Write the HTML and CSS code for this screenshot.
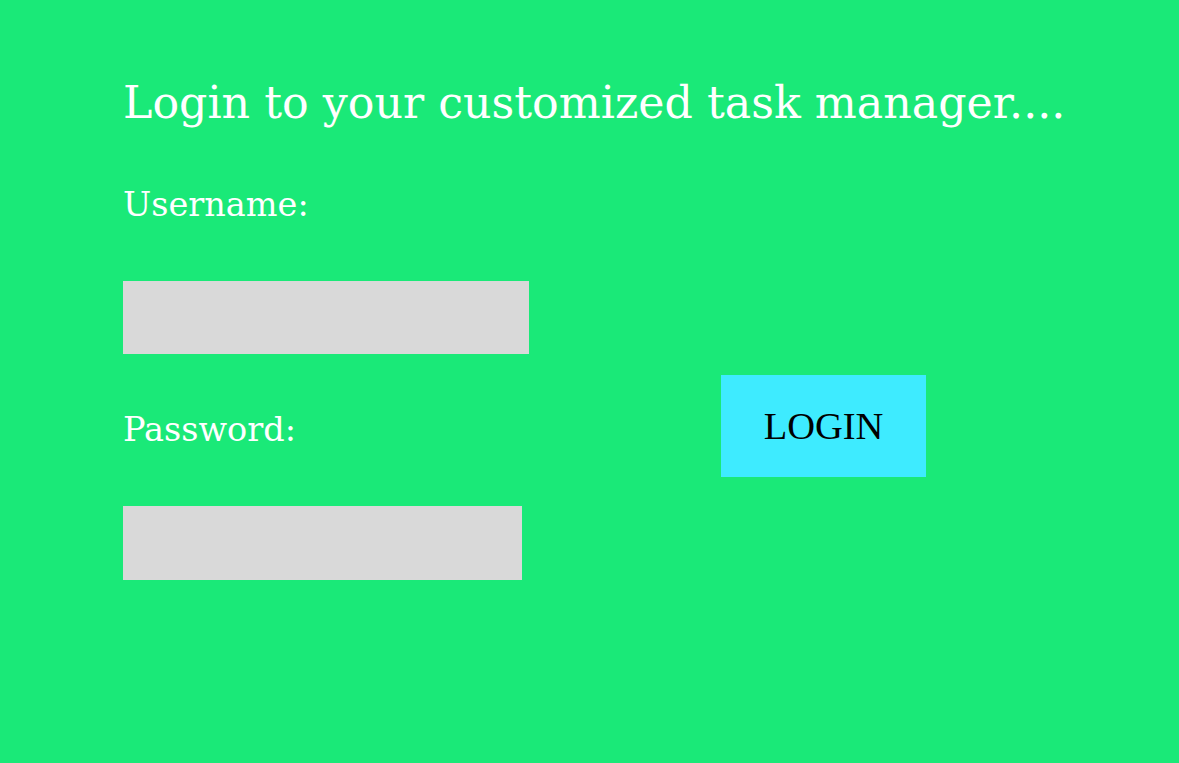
FILE: index.html
```html
<!DOCTYPE html>
<html lang="en">
<head>
<meta charset="utf-8">
<title>Login</title>
<link rel="stylesheet" href="styles.css">
</head>
<body>
<main class="page">
  <h1 class="title">Login to your customized task manager....</h1>
  <form class="login-form">
    <label class="field-label" for="username">Username:</label>
    <input class="field-input field-user" id="username" type="text">
    <label class="field-label" for="password">Password:</label>
    <input class="field-input field-pass" id="password" type="password">
    <button class="login-btn" type="button">LOGIN</button>
  </form>
</main>
</body>
</html>
```

FILE: styles.css
```css
html, body {
  margin: 0;
  padding: 0;
  background: #1ae978;
  height: 100%;
}

.page {
  padding: 73px 0 0 123px;
  font-family: "DejaVu Serif", "Liberation Serif", serif;
  color: #ffffff;
}

.title {
  margin: 0 0 48px 0;
  font-size: 44.3px;
  line-height: 60px;
  font-weight: normal;
  white-space: nowrap;
}

.login-form {
  display: grid;
  grid-template-columns: 406px 205px;
  column-gap: 192px;
  row-gap: 52px;
  align-items: start;
}

.field-label {
  grid-column: 1;
  font-size: 33.5px;
  line-height: 48px;
}

.field-input {
  grid-column: 1;
  height: 73px;
  border: none;
  background: #d9d9d9;
  padding: 0;
  margin: 0;
  outline: none;
}

.field-user {
  width: 406px;
}

.field-pass {
  width: 399px;
  height: 74px;
}

.login-btn {
  grid-column: 2;
  grid-row: 2 / 5;
  align-self: center;
  margin-bottom: 9px;
  width: 205px;
  height: 102px;
  border: none;
  background: #3eebff;
  color: #000000;
  font-family: "Liberation Serif", "DejaVu Serif", serif;
  font-size: 38.5px;
  padding: 0;
  cursor: pointer;
}
```
